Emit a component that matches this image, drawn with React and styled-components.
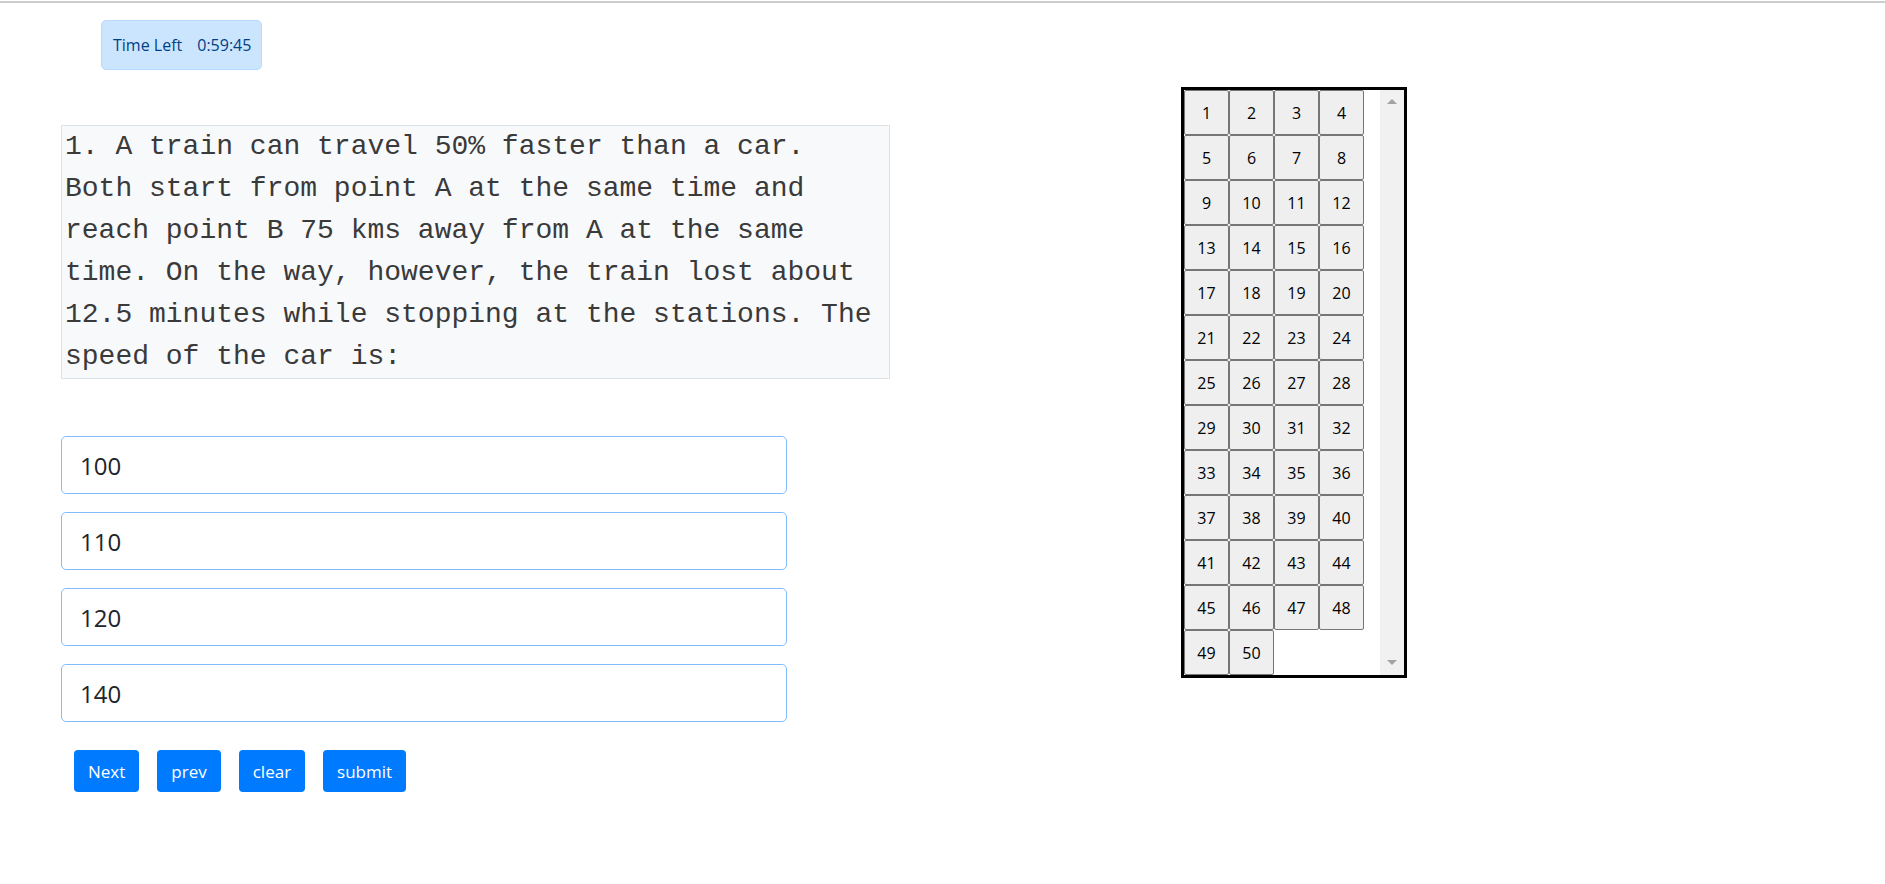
import React from "react";
import styled, { createGlobalStyle } from "styled-components";

const GlobalStyle = createGlobalStyle`
  body {
    margin: 0;
    background: #fff;
    font-family: "Segoe UI", "Open Sans", sans-serif;
    color: #212529;
  }
`

const Page = styled.div`
  margin-top: 1px;
  border-top: 2px solid #cccccc;
`
const TimerRow = styled.div`
  padding: 17px 0 0 101px;
`
const Timer = styled.div`
  display: inline-flex;
  align-items: center;
  height: 50px;
  box-sizing: border-box;
  padding: 0 10px 0 11px;
  background: #cce5ff;
  border: 1px solid #b8daff;
  border-radius: 5px;
  color: #004085;
  font-size: 16px;
`
const Clock = styled.span`
  margin-left: 15px;
`
const Main = styled.div`
  display: flex;
  align-items: flex-start;
  padding: 17px 0 0 61px;
`
const Left = styled.div`
  width: 829px;
  padding-top: 38px;
`
const Question = styled.div`
  box-sizing: border-box;
  width: 829px;
  padding: 0 11px 0 3px;
  background: #f8f9fa;
  border: 1px solid #dfe2e5;
  font-family: "Liberation Mono", "Courier New", monospace;
  font-size: 28px;
  line-height: 42px;
  color: #3a3a3a;
`
const Options = styled.div`
  display: flex;
  flex-direction: column;
  gap: 18px;
  margin-top: 57px;
  width: 726px;
`
const Option = styled.div`
  height: 58px;
  box-sizing: border-box;
  display: flex;
  align-items: center;
  padding: 0 18px;
  border: 1px solid #80bdff;
  border-radius: 5px;
  font-size: 24px;
  color: #212529;
`
const Actions = styled.div`
  display: flex;
  gap: 18px;
  margin-top: 28px;
  padding-left: 13px;
`
const Button = styled.button`
  font-family: inherit;
  font-size: 17px;
  line-height: 27px;
  padding: 7.5px 14px;
  color: #fff;
  background: #007bff;
  border: none;
  border-radius: 4px;
`
const Right = styled.div`
  margin-left: 291px;
`
const Palette = styled.div`
  display: flex;
  border: 3px solid #000;
`
const Grid = styled.div`
  width: 196px;
  display: grid;
  grid-template-columns: repeat(4, 45px);
  grid-auto-rows: 45px;
  align-content: start;
`
const Num = styled.button`
  box-sizing: border-box;
  width: 45px;
  height: 45px;
  margin: 0;
  padding: 0;
  background: #efefef;
  border: 1px solid #767676;
  border-radius: 2px;
  font-family: "Segoe UI", "Open Sans", sans-serif;
  font-size: 16px;
  color: #000;
`
const Track = styled.div`
  width: 24px;
  box-sizing: border-box;
  padding: 9px 0 10px;
  background: #f1f1f1;
  display: flex;
  flex-direction: column;
  justify-content: space-between;
  align-items: center;
`
const Arrow = styled.span`
  width: 0;
  height: 0;
  border-left: 5.5px solid transparent;
  border-right: 5.5px solid transparent;
  ${p => p.$down ? "border-top: 5px solid #a3a3a3;" : "border-bottom: 5px solid #a3a3a3;"}
`

const answers = ["100", "110", "120", "140"]
const numbers = Array.from({ length: 50 }, (_, i) => i + 1)

export default function App() {
  return (
    <Page>
      <GlobalStyle />
      <TimerRow>
        <Timer>Time Left<Clock>0:59:45</Clock></Timer>
      </TimerRow>
      <Main>
        <Left>
          <Question>
            1. A train can travel 50% faster than a car. Both start from point A at the same time and reach point B 75 kms away from A at the same time. On the way, however, the train lost about 12.5 minutes while stopping at the stations. The speed of the car is:
          </Question>
          <Options>
            {answers.map(a => <Option key={a}>{a}</Option>)}
          </Options>
          <Actions>
            <Button>Next</Button>
            <Button>prev</Button>
            <Button>clear</Button>
            <Button>submit</Button>
          </Actions>
        </Left>
        <Right>
          <Palette>
            <Grid>
              {numbers.map(n => <Num key={n}>{n}</Num>)}
            </Grid>
            <Track>
              <Arrow />
              <Arrow $down />
            </Track>
          </Palette>
        </Right>
      </Main>
    </Page>
  )
}
